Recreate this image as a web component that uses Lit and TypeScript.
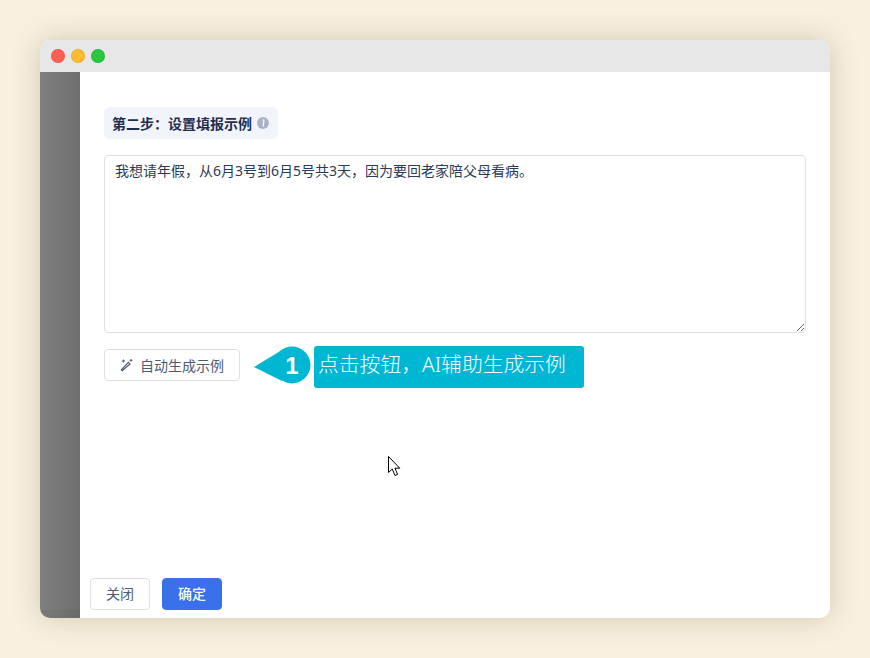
import { LitElement, html, css } from 'lit';
import { customElement } from 'lit/decorators.js';

@customElement('app-root')
export class AppRoot extends LitElement {
  static styles = css`
    :host {
      display: block;
      font-family: "Noto Sans", "Noto Sans CJK SC", sans-serif;
    }
    .page {
      position: relative;
      box-sizing: border-box;
      width: 870px;
      height: 658px;
      padding: 40px;
      background: #f9f0e0;
      overflow: hidden;
    }
    .window {
      display: flex;
      flex-direction: column;
      height: 578px;
      border-radius: 10px;
      overflow: hidden;
      background: #fff;
      box-shadow: 0 0 28px rgba(110, 90, 50, 0.28);
    }
    .titlebar {
      display: flex;
      align-items: center;
      gap: 6px;
      height: 32px;
      flex: none;
      padding-left: 11px;
      background: #e7e7e7;
    }
    .dot {
      box-sizing: border-box;
      width: 14px;
      height: 14px;
      border-radius: 50%;
      border: 1px solid rgba(0, 0, 0, 0.08);
    }
    .red { background: #ff5f57; }
    .yellow { background: #febc2e; }
    .green { background: #28c840; }
    .body {
      display: flex;
      flex: 1;
      min-height: 0;
    }
    .side {
      width: 40px;
      flex: none;
      background: linear-gradient(90deg, #808080, #6e6e6e);
      box-shadow: inset 0 -8px 0 rgba(0, 0, 0, 0.04);
    }
    .main {
      display: flex;
      flex-direction: column;
      flex: 1;
      min-width: 0;
    }
    .form {
      display: flex;
      flex-direction: column;
      align-items: flex-start;
      flex: 1;
      padding: 35px 24px 0 24px;
    }
    .step {
      display: flex;
      align-items: center;
      gap: 5px;
      height: 32px;
      padding: 0 9px 0 8px;
      border-radius: 6px;
      background: #f1f4fb;
      color: #1f2f4f;
      font-size: 14px;
      font-weight: 600;
    }
    .info {
      width: 12px;
      height: 12px;
    }
    textarea {
      display: block;
      box-sizing: border-box;
      width: 702px;
      height: 178px;
      margin-top: 16px;
      padding: 5px 10px;
      border: 1px solid #dcdfe6;
      border-radius: 4px;
      outline: none;
      resize: vertical;
      color: #2a3a5a;
      font-family: inherit;
      font-size: 14px;
      line-height: 20px;
    }
    .btn {
      box-sizing: border-box;
      display: flex;
      align-items: center;
      justify-content: center;
      height: 32px;
      border: 1px solid #dcdfe6;
      border-radius: 4px;
      background: #fff;
      color: #4e5b76;
      font-family: inherit;
      font-size: 14px;
      padding: 0;
    }
    .gen {
      width: 136px;
      gap: 6px;
      margin-top: 16px;
    }
    .gen svg {
      width: 14px;
      height: 14px;
    }
    .footer {
      display: flex;
      gap: 12px;
      padding: 0 0 8px 10px;
    }
    .footer .btn {
      width: 60px;
      padding-bottom: 2px;
    }
    .primary {
      border-color: #3a71ea;
      background: #3a71ea;
      color: #fff;
      font-weight: 500;
    }
    .callout {
      position: absolute;
      left: 254px;
      top: 346px;
      display: flex;
      align-items: flex-start;
      height: 42px;
    }
    .pointer {
      width: 58px;
      height: 38px;
      flex: none;
      margin-right: 2px;
    }
    .pointer text {
      fill: #fff;
      font-family: "Liberation Sans", Arial, sans-serif;
      font-size: 24px;
      font-weight: 700;
      text-anchor: middle;
    }
    .label {
      box-sizing: border-box;
      width: 270px;
      height: 42px;
      line-height: 37px;
      padding-left: 4px;
      border-radius: 3px;
      background: #00b7d3;
      color: #f2fdff;
      font-size: 20.8px;
      font-weight: 300;
      white-space: nowrap;
    }
    .cursor {
      position: absolute;
      left: 387px;
      top: 455px;
      width: 15px;
      height: 23px;
    }
  `;

  render() {
    const example = '我想请年假，从6月3号到6月5号共3天，因为要回老家陪父母看病。';
    return html`
      <div class="page">
        <div class="window">
          <div class="titlebar">
            <span class="dot red"></span>
            <span class="dot yellow"></span>
            <span class="dot green"></span>
          </div>
          <div class="body">
            <div class="side"></div>
            <div class="main">
              <div class="form">
                <div class="step">
                  第二步：设置填报示例
                  <svg class="info" viewBox="0 0 13 13">
                    <circle cx="6.5" cy="6.5" r="6.4" fill="#aab2c2"></circle>
                    <circle cx="7.2" cy="3.4" r="1" fill="#fff"></circle>
                    <path d="M6.2 5.6h1.3l-.8 4.2h1" fill="none" stroke="#fff" stroke-width="1.2"></path>
                  </svg>
                </div>
                <textarea .value=${example}></textarea>
                <button class="btn gen">
                  <svg viewBox="0 0 14 14" fill="none" stroke="#4e5b76" stroke-width="1.2">
                    <path d="M2.2 12.6 1.4 11.8 8.4 4.4 10 6z"></path>
                    <path d="M3.4 1.5v3M1.9 3h3M11 1v2.8M9.6 2.4h2.8" stroke-width="1"></path>
                  </svg>
                  自动生成示例
                </button>
              </div>
              <div class="footer">
                <button class="btn">关闭</button>
                <button class="btn primary">确定</button>
              </div>
            </div>
          </div>
        </div>
        <div class="callout">
          <svg class="pointer" viewBox="0 0 58 38">
            <path d="M0 21 L28 4 L28 35 Z" fill="#00b7d3"></path>
            <circle cx="38" cy="19" r="18.5" fill="#00b7d3"></circle>
            <text x="38" y="28">1</text>
          </svg>
          <div class="label">点击按钮，AI辅助生成示例</div>
        </div>
        <svg class="cursor" viewBox="0 0 15 23">
          <path d="M1.5 1.5V17.5L5.2 14L8 20.5L10.6 19.4L7.9 13.2H12.8Z" fill="#fff" stroke="#000" stroke-width="1"></path>
        </svg>
      </div>
    `;
  }
}
